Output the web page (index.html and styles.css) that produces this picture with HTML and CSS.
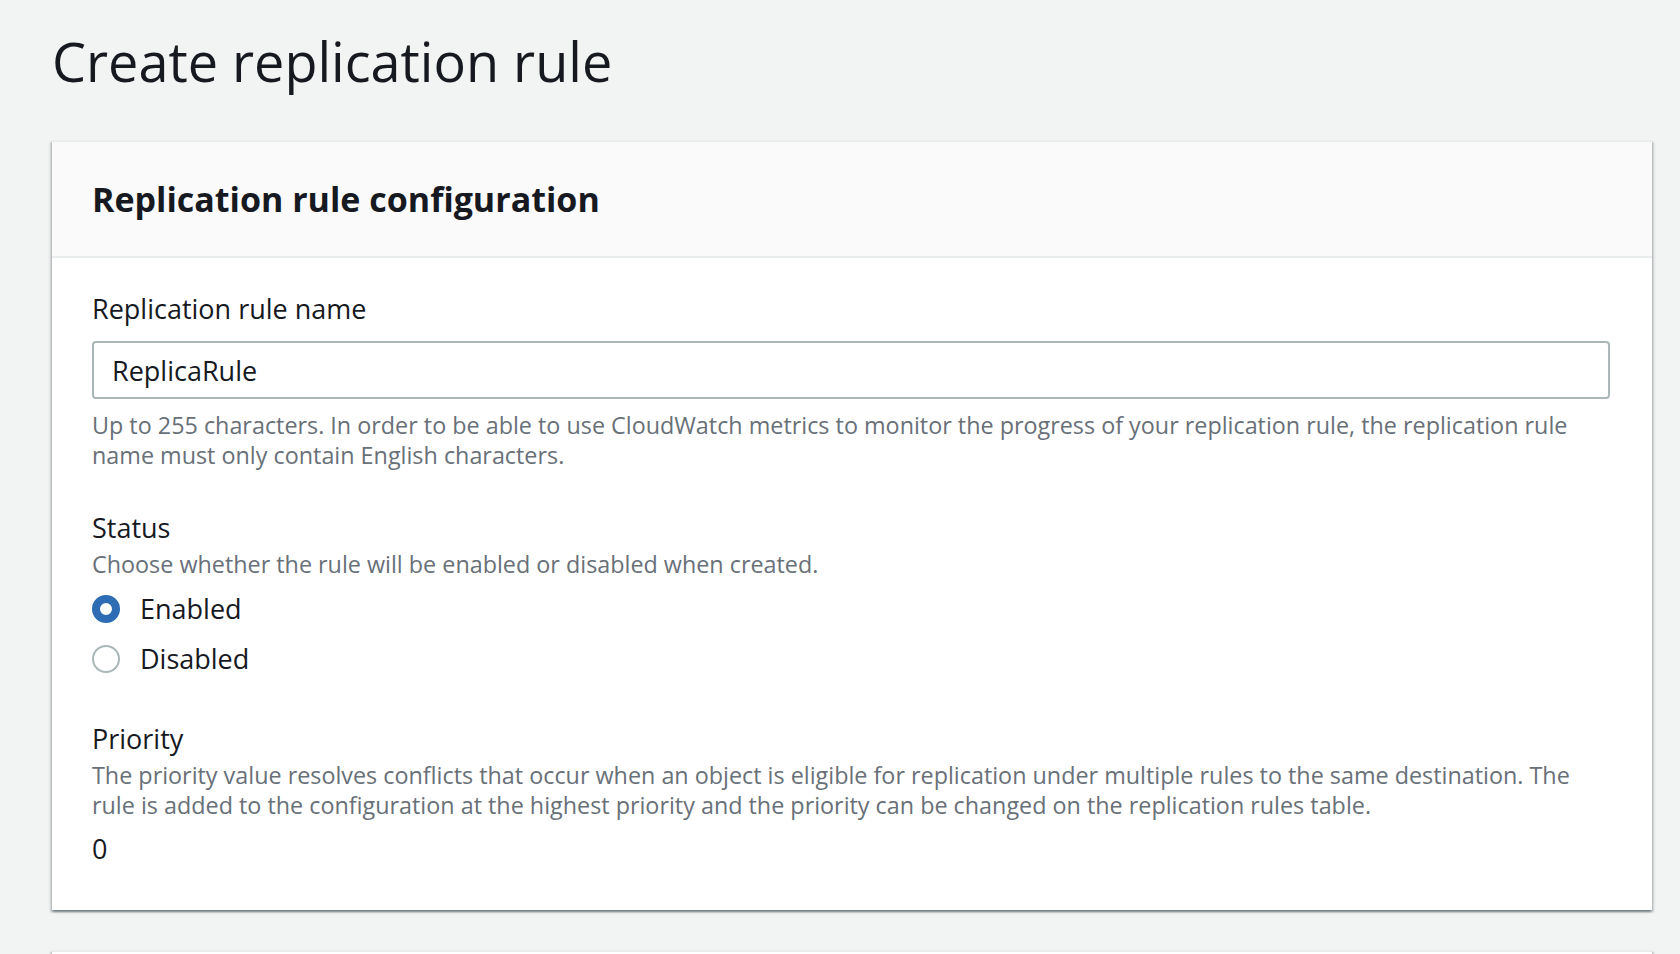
FILE: index.html
```html
<!DOCTYPE html>
<html lang="en">
<head>
<meta charset="utf-8">
<title>Create replication rule</title>
<link rel="stylesheet" href="styles.css">
</head>
<body>
<div class="page">
  <h1 class="page-title">Create replication rule</h1>

  <section class="card">
    <header class="card-header">
      <h2 class="card-title">Replication rule configuration</h2>
    </header>
    <div class="card-body">
      <div class="field">
        <label class="field-label" for="rule-name">Replication rule name</label>
        <input class="text-input" id="rule-name" type="text" value="ReplicaRule">
        <p class="field-hint">Up to 255 characters. In order to be able to use CloudWatch metrics to monitor the progress of your replication rule, the replication rule name must only contain English characters.</p>
      </div>

      <div class="field field-status">
        <div class="field-label">Status</div>
        <p class="field-desc">Choose whether the rule will be enabled or disabled when created.</p>
        <div class="radio-group">
          <label class="radio-row">
            <span class="radio radio-checked"></span>
            <span class="radio-text">Enabled</span>
          </label>
          <label class="radio-row">
            <span class="radio"></span>
            <span class="radio-text">Disabled</span>
          </label>
        </div>
      </div>

      <div class="field field-priority">
        <div class="field-label">Priority</div>
        <p class="field-desc">The priority value resolves conflicts that occur when an object is eligible for replication under multiple rules to the same destination. The rule is added to the configuration at the highest priority and the priority can be changed on the replication rules table.</p>
        <div class="field-value">0</div>
      </div>
    </div>
  </section>

  <section class="card card-next"></section>
</div>
</body>
</html>
```

FILE: styles.css
```css
* {
  box-sizing: border-box;
}

html, body {
  margin: 0;
  padding: 0;
}

body {
  background: #f2f3f3;
  font-family: "Open Sans", "Noto Sans", Arial, sans-serif;
  color: #16191f;
  overflow: hidden;
}

.page {
  padding: 29px 28px 0 52px;
  height: 954px;
  overflow: hidden;
}

.page-title {
  margin: 0;
  font-size: 54px;
  line-height: 64px;
  font-weight: 400;
  color: #16191f;
}

.card {
  margin-top: 47px;
  background: #ffffff;
  border-top: 2px solid #eaeded;
  box-shadow: 0 2px 2px 0 rgba(0, 28, 36, 0.35), 2px 2px 2px 0 rgba(0, 28, 36, 0.15), -2px 2px 2px 0 rgba(0, 28, 36, 0.15);
}

.card-header {
  background: #fafafa;
  padding: 35px 40px 35px;
  border-bottom: 2px solid #eaeded;
}

.card-title {
  margin: 0;
  font-size: 34px;
  line-height: 44px;
  font-weight: 700;
  color: #16191f;
}

.card-body {
  padding: 30px 42px 40px 40px;
}

.field-label {
  display: block;
  font-size: 27px;
  line-height: 42px;
  color: #16191f;
}

.text-input {
  display: block;
  width: 100%;
  margin-top: 11px;
  height: 58px;
  padding: 0 18px;
  border: 2px solid #aab7b8;
  border-radius: 4px;
  background: #ffffff;
  font-family: inherit;
  font-size: 27px;
  line-height: 54px;
  color: #16191f;
  outline: none;
}

.field-hint {
  margin: 11px 0 0;
  font-size: 23.35px;
  line-height: 30px;
  color: #687078;
  max-width: 1500px;
}

.field-desc {
  margin: 0;
  font-size: 23.35px;
  line-height: 30px;
  color: #687078;
}

.field-status {
  margin-top: 37px;
}

.radio-group {
  margin-top: 5px;
  display: flex;
  flex-direction: column;
  gap: 0;
}

.radio-row {
  display: flex;
  align-items: center;
  height: 50px;
  gap: 20px;
}

.radio {
  flex: none;
  width: 28px;
  height: 28px;
  border-radius: 50%;
  border: 2.5px solid #aab7b8;
  background: #ffffff;
}

.radio-checked {
  border: 8px solid #2e6db4;
  background: #ffffff;
}

.radio-text {
  font-size: 27px;
  line-height: 50px;
  color: #16191f;
}

.field-priority {
  margin-top: 34px;
}

.field-priority .field-desc {
  max-width: 1510px;
}

.field-value {
  margin-top: 8px;
  font-size: 27px;
  line-height: 42px;
  color: #16191f;
}

.card-next {
  margin-top: 40px;
  height: 60px;
  background: #ffffff;
}
```
